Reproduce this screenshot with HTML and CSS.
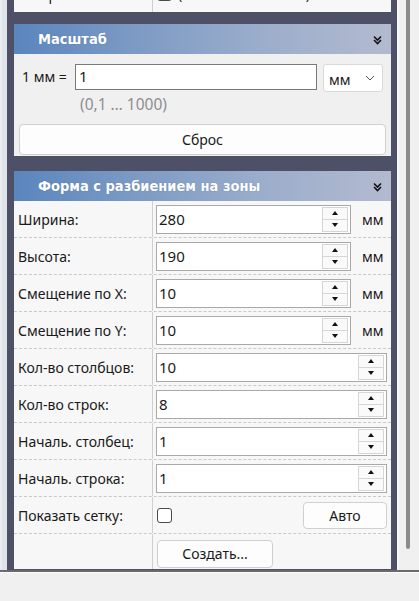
FILE: index.html
```html
<!DOCTYPE html>
<html lang="ru">
<head>
<meta charset="utf-8">
<title>Форма с разбиением на зоны</title>
<link rel="stylesheet" href="styles.css">
</head>
<body>
<div class="screen">
  <div class="workspace">
    <div class="edge"></div>
    <div class="dock">
      <section class="panel tail">
        <div class="row tail-row">
          <div class="label">Резервный имя:</div>
          <div class="value"><span class="check"></span><span class="check-text">(Учет по по частям)</span></div>
        </div>
      </section>

      <section class="panel">
        <header class="panel-head">
          <span class="panel-title">Масштаб</span>
          <svg class="collapse" width="9" height="10" viewBox="0 0 9 10"><path d="M1 1.5 L4.5 5 L8 1.5 M1 5 L4.5 8.5 L8 5" fill="none" stroke="#111" stroke-width="1.6"/></svg>
        </header>
        <div class="scale-body">
          <div class="scale-line">
            <span class="scale-label">1 мм =</span>
            <div class="text-input">1</div>
            <div class="select"><span>мм</span>
              <svg width="10" height="6" viewBox="0 0 10 6"><path d="M1 1 L5 5 L9 1" fill="none" stroke="#555" stroke-width="1"/></svg>
            </div>
          </div>
          <div class="hint">(0,1 … 1000)</div>
          <div class="btn wide">Сброс</div>
        </div>
      </section>

      <section class="panel">
        <header class="panel-head">
          <span class="panel-title">Форма с разбиением на зоны</span>
          <svg class="collapse" width="9" height="10" viewBox="0 0 9 10"><path d="M1 1.5 L4.5 5 L8 1.5 M1 5 L4.5 8.5 L8 5" fill="none" stroke="#111" stroke-width="1.6"/></svg>
        </header>
        <div class="grid">
          <div class="row">
            <div class="label">Ширина:</div>
            <div class="value"><div class="spin short"><span class="num">280</span><span class="arrows"><span class="up"></span><span class="down"></span></span></div><span class="unit">мм</span></div>
          </div>
          <div class="row">
            <div class="label">Высота:</div>
            <div class="value"><div class="spin short"><span class="num">190</span><span class="arrows"><span class="up"></span><span class="down"></span></span></div><span class="unit">мм</span></div>
          </div>
          <div class="row">
            <div class="label">Смещение по X:</div>
            <div class="value"><div class="spin short"><span class="num">10</span><span class="arrows"><span class="up"></span><span class="down"></span></span></div><span class="unit">мм</span></div>
          </div>
          <div class="row">
            <div class="label">Смещение по Y:</div>
            <div class="value"><div class="spin short"><span class="num">10</span><span class="arrows"><span class="up"></span><span class="down"></span></span></div><span class="unit">мм</span></div>
          </div>
          <div class="row">
            <div class="label">Кол-во столбцов:</div>
            <div class="value"><div class="spin long"><span class="num">10</span><span class="arrows"><span class="up"></span><span class="down"></span></span></div></div>
          </div>
          <div class="row">
            <div class="label">Кол-во строк:</div>
            <div class="value"><div class="spin long"><span class="num">8</span><span class="arrows"><span class="up"></span><span class="down"></span></span></div></div>
          </div>
          <div class="row">
            <div class="label">Началь. столбец:</div>
            <div class="value"><div class="spin long"><span class="num">1</span><span class="arrows"><span class="up"></span><span class="down"></span></span></div></div>
          </div>
          <div class="row">
            <div class="label">Началь. строка:</div>
            <div class="value"><div class="spin long"><span class="num">1</span><span class="arrows"><span class="up"></span><span class="down"></span></span></div></div>
          </div>
          <div class="row">
            <div class="label">Показать сетку:</div>
            <div class="value split"><span class="check"></span><div class="btn auto">Авто</div></div>
          </div>
          <div class="row last">
            <div class="label"></div>
            <div class="value"><div class="btn create">Создать...</div></div>
          </div>
        </div>
      </section>
    </div>
    <div class="scroll"><div class="thumb"></div></div>
  </div>
  <div class="status"></div>
</div>
</body>
</html>
```

FILE: styles.css
```css
* { box-sizing: border-box; }
html, body { margin: 0; padding: 0; }
body {
  background: #f0f0f0;
  font-family: "Noto Sans", "Open Sans", sans-serif;
  font-size: 14px;
  color: #1a1a1a;
  width: 419px;
  height: 601px;
  overflow: hidden;
}
.screen { display: flex; flex-direction: column; height: 601px; }
.workspace { display: flex; height: 570px; }
.edge {
  width: 7px;
  background: #dfe3ea;
  border-left: 2px solid #e9ecf1;
}
.dock {
  width: 390px;
  background: #4e5067;
  padding: 0 6px 0 7px;
  display: flex;
  flex-direction: column;
  overflow: hidden;
}
.scroll {
  width: 22px;
  background: #f0f0f0;
  border-left: 2px solid #f7f7f7;
  padding-left: 7px;
}
.thumb {
  width: 4px;
  height: 549px;
  background: #8b8b8b;
  border-radius: 0 0 2px 2px;
}
.status {
  height: 31px;
  border-top: 2px solid #6a6a6a;
  background: #f0f0f0;
  box-shadow: inset 0 1px 0 #fdfdfd;
}

.panel { display: flex; flex-direction: column; }
.tail {
  height: 12px;
  background: #f7f7f7;
  justify-content: flex-end;
  overflow: hidden;
  margin-bottom: 12px;
  flex: none;
}
.panel + .panel { margin-bottom: 15px; }

.panel-head {
  height: 30px;
  flex: none;
  display: flex;
  align-items: center;
  justify-content: space-between;
  padding: 0 9px 0 24px;
  background: linear-gradient(90deg, #5a86bd 0%, #7f9cc5 35%, #9aadcb 65%, #b3bacf 100%);
}
.panel-title {
  font-family: "DejaVu Sans Condensed", "DejaVu Sans", sans-serif;
  font-weight: bold;
  font-size: 14.5px;
  color: #fff;
  text-shadow: 0 0 1px rgba(60, 80, 120, 0.5);
}
.collapse { display: block; margin-top: 1px; }

.scale-body {
  height: 102px;
  background: #f0f0f0;
  padding: 10px 5px 0 5px;
}
.scale-line { display: flex; align-items: flex-start; }
.scale-label { width: 56px; padding: 3px 0 0 3px; }
.text-input {
  width: 242px;
  height: 26px;
  border: 1px solid #7a7a7a;
  background: #fff;
  padding: 1px 0 0 3px;
  font-size: 15px;
}
.select {
  width: 60px;
  height: 28px;
  margin-left: 6px;
  border: 1px solid #d9d9d9;
  border-radius: 3px;
  background: #fff;
  display: flex;
  align-items: center;
  justify-content: space-between;
  padding: 2px 7px 0 5px;
}
.select svg { margin-top: -3px; }
.hint {
  margin: 0 0 0 61px;
  color: #8e8e8e;
  font-size: 15.5px;
  line-height: 20px;
  padding-top: 2px;
}
.btn {
  display: flex;
  align-items: center;
  justify-content: center;
  background: #fdfdfd;
  border: 1px solid #d0d0d0;
  border-radius: 4px;
}
.btn.wide { height: 31px; margin-top: 10px; }

.grid { background: #f7f7f7; flex: 1; }
.row {
  height: 37px;
  display: flex;
  border-bottom: 1px dashed #c9c9c9;
}
.row.last { border-bottom: none; height: 35px; }
.tail-row { flex: none; border-bottom: none; }
.label {
  width: 139px;
  border-right: 1px solid #cfcfcf;
  display: flex;
  align-items: center;
  padding-left: 4px;
  padding-top: 1px;
}
.value {
  flex: 1;
  display: flex;
  align-items: center;
  padding-left: 3px;
}
.value.split { justify-content: space-between; padding-right: 4px; }
.check {
  width: 15px;
  height: 15px;
  border: 1px solid #4a4a4a;
  border-radius: 3px;
  background: #fff;
  margin-left: 1px;
}
.check-text { margin-left: 6px; }
.spin {
  height: 29px;
  border: 1px solid #a9a9a9;
  background: #fff;
  display: flex;
  align-items: stretch;
}
.spin.short { width: 195px; }
.spin.long { width: 231px; }
.num { flex: 1; padding: 3px 0 0 2px; font-size: 15px; }
.arrows {
  width: 26px;
  margin: 1px 2px 1px 0;
  display: flex;
  flex-direction: column;
}
.arrows span {
  flex: 1;
  border: 1px solid #d6d6d6;
  background: #fafafa;
  display: flex;
  align-items: center;
  justify-content: center;
}
.arrows span + span { border-top: none; }
.up::before, .down::before {
  content: "";
  width: 0;
  height: 0;
  border-left: 3.5px solid transparent;
  border-right: 3.5px solid transparent;
}
.up::before { border-bottom: 4px solid #111; }
.down::before { border-top: 4px solid #111; }
.unit { margin-left: 11px; padding-top: 1px; }
.btn.auto { width: 84px; height: 27px; }
.btn.create { width: 116px; height: 28px; margin-left: 1px; margin-top: 4px; }
```
